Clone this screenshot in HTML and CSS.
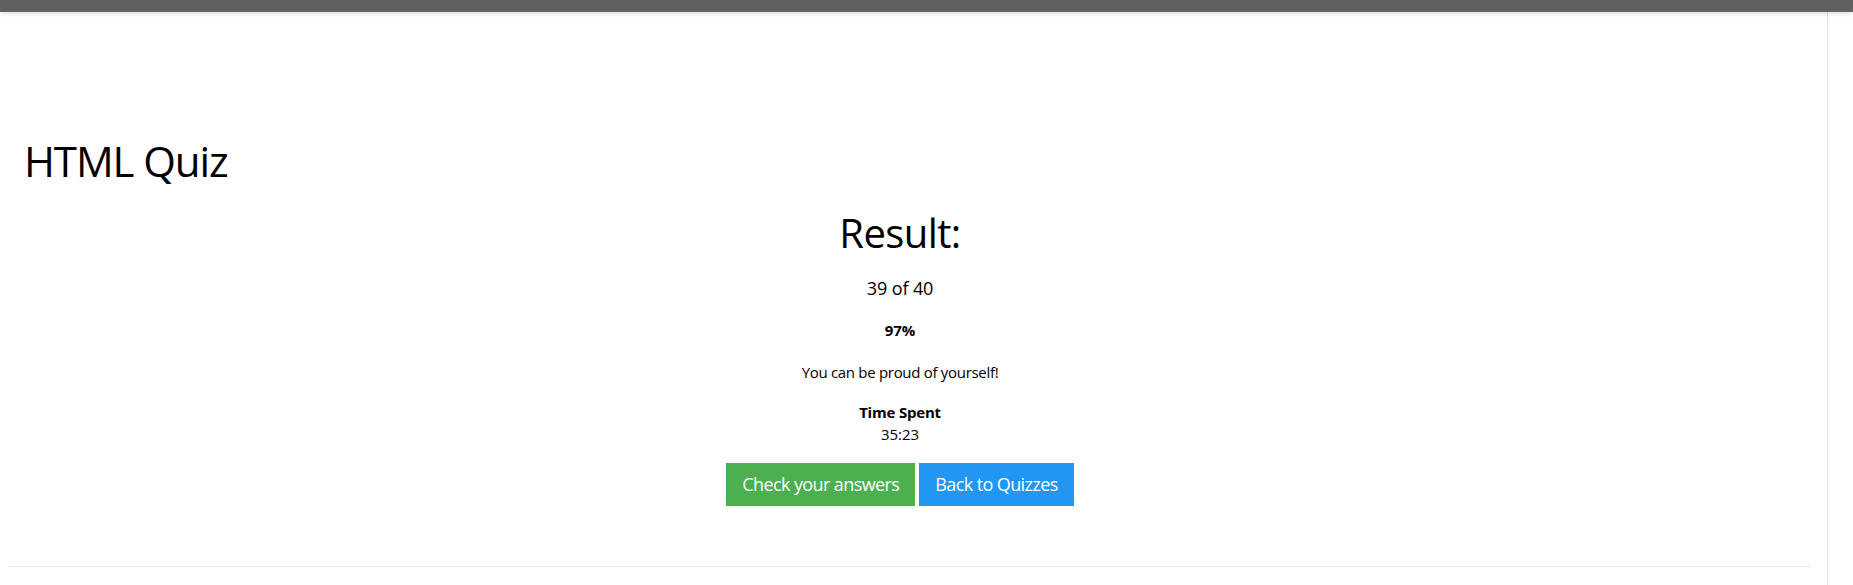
FILE: index.html
```html
<!DOCTYPE html>
<html lang="en">
<head>
<meta charset="utf-8">
<title>HTML Quiz</title>
<link rel="stylesheet" href="styles.css">
</head>
<body>
<div class="topbar"></div>
<div class="page">
  <main class="main">
    <h1 class="quiz-title">HTML Quiz</h1>
    <section class="result">
      <h2 class="result-title">Result:</h2>
      <p class="score">39 of 40</p>
      <p class="percent">97%</p>
      <p class="message">You can be proud of yourself!</p>
      <div class="time">
        <div class="time-label">Time Spent</div>
        <div class="time-value">35:23</div>
      </div>
      <div class="actions">
        <a class="btn btn-green" href="#">Check your answers</a>
        <a class="btn btn-blue" href="#">Back to Quizzes</a>
      </div>
    </section>
    <hr class="divider">
  </main>
  <aside class="gutter"></aside>
</div>
</body>
</html>
```

FILE: styles.css
```css
html, body {
  margin: 0;
  padding: 0;
  background: #fff;
}
body {
  font-family: "Open Sans", "Noto Sans", Arial, sans-serif;
  font-size: 15px;
  line-height: 22px;
  color: #000;
  height: 585px;
  overflow: hidden;
}
.topbar {
  height: 12px;
  background: #616161;
  box-shadow: 0 2px 4px rgba(0, 0, 0, 0.12);
  position: relative;
  z-index: 2;
}
.page {
  display: flex;
  height: 573px;
}
.main {
  flex: 1;
  padding-top: 124px;
}
.gutter {
  width: 25px;
  border-left: 1px solid #e6e6e6;
  background: #fff;
}
.quiz-title {
  margin: 0 0 0 24px;
  font-size: 42px;
  line-height: 50px;
  font-weight: 400;
  letter-spacing: -1.1px;
}
.result {
  margin: 23px 43px 0 16px;
  text-align: center;
}
.result-title {
  margin: 0;
  font-size: 40px;
  line-height: 48px;
  font-weight: 400;
  letter-spacing: -0.6px;
}
.score {
  margin: 18px 0 0;
  font-size: 18px;
  line-height: 27px;
  letter-spacing: -0.1px;
}
.percent {
  margin: 17px 0 0;
  font-weight: 700;
}
.message {
  margin: 20px 0 0;
  letter-spacing: -0.3px;
}
.time {
  margin-top: 18px;
}
.time-label {
  font-weight: 700;
  letter-spacing: -0.2px;
}
.actions {
  margin-top: 18px;
  display: flex;
  justify-content: center;
  gap: 4px;
}
.btn {
  display: inline-block;
  padding: 8px 16px;
  font-size: 18px;
  line-height: 27px;
  color: #fff;
  text-decoration: none;
  letter-spacing: -0.6px;
}
.btn-green {
  background: #4caf50;
}
.btn-blue {
  background: #2196f3;
}
.divider {
  margin: 60px 16px 0 8px;
  border: 0;
  border-top: 1px solid #e8e8e8;
  height: 0;
}
```
